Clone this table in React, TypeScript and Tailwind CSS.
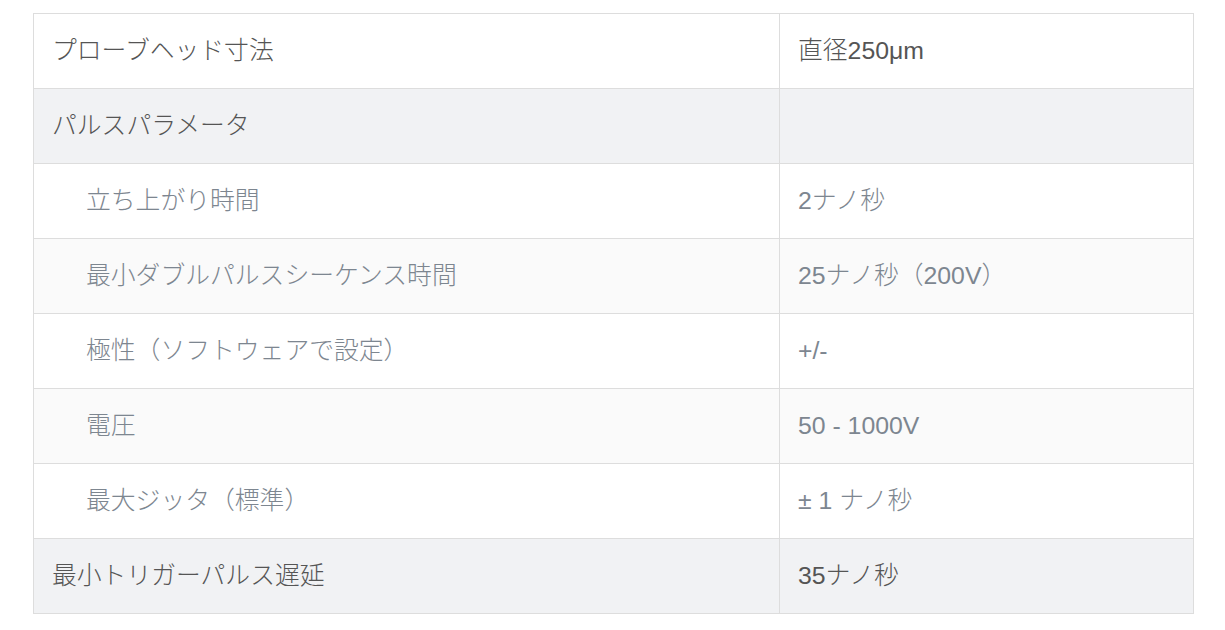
import React from 'react';

type Row = { label: string; value: string; sub?: boolean; bg: string };

const rows: Row[] = [
    { label: 'プローブヘッド寸法', value: '直径250μm', bg: 'bg-white' },
    { label: 'パルスパラメータ', value: '', bg: 'bg-[#f1f2f4]' },
    { label: '立ち上がり時間', value: '2ナノ秒', sub: true, bg: 'bg-white' },
    { label: '最小ダブルパルスシーケンス時間', value: '25ナノ秒（200V）', sub: true, bg: 'bg-[#fafafa]' },
    { label: '極性（ソフトウェアで設定）', value: '+/-', sub: true, bg: 'bg-white' },
    { label: '電圧', value: '50 - 1000V', sub: true, bg: 'bg-[#fafafa]' },
    { label: '最大ジッタ（標準）', value: '± 1 ナノ秒', sub: true, bg: 'bg-white' },
    { label: '最小トリガーパルス遅延', value: '35ナノ秒', bg: 'bg-[#f1f2f4]' },
];

export default function App() {
    return (
        <div className="min-h-[630px] bg-white pt-[13px] pl-[33px] font-['Liberation_Sans','Noto_Sans_CJK_JP',sans-serif]">
            <table className="w-[1161px] border-collapse text-[24.8px] leading-none font-light">
                <tbody>
                    {rows.map((r) => (
                        <tr key={r.label} className={`${r.bg} h-[75px]`}>
                            <td
                                className={`w-[746px] border border-[#dddddd] pr-4 align-middle ${
                                    r.sub ? 'pl-[52px] text-[#7d8690]' : 'pl-[18px] text-[#555555]'
                                }`}
                            >
                                {r.label}
                            </td>
                            <td
                                className={`border border-[#dddddd] pl-[18px] align-middle ${
                                    r.sub ? 'text-[#7d8690]' : 'text-[#555555]'
                                }`}
                            >
                                {r.value}
                            </td>
                        </tr>
                    ))}
                </tbody>
            </table>
        </div>
    );
}
